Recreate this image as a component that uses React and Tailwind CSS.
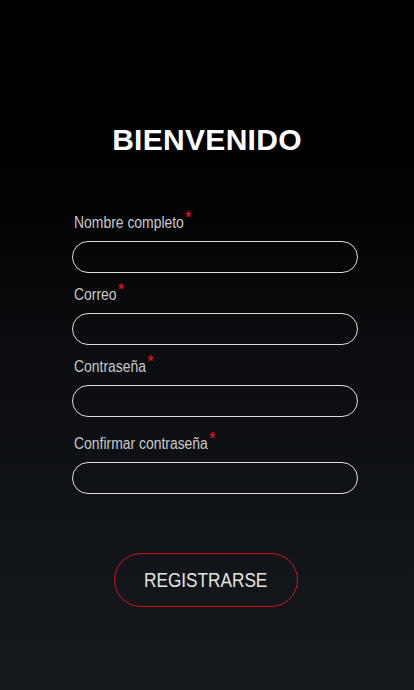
import React from "react";

const Field = ({ label, className = "" }) => (
  <div className={`flex flex-col ${className}`}>
    <label className="h-[18px] pl-[2px] leading-[18px]">
      <span className="inline-block origin-left scale-x-[0.87] whitespace-nowrap text-[16px] leading-[18px] text-[#c9c9c9]">
        {label}
        <span className="relative -top-[5px] ml-[2px] text-[16px] font-bold leading-none text-[#d3121c]">*</span>
      </span>
    </label>
    <input
      type="text"
      className="mt-[9px] h-[32px] w-full rounded-[16px] border border-[#dedede] bg-transparent px-4 text-white outline-none"
    />
  </div>
);

export default function App() {
  return (
    <div className="flex min-h-[690px] w-full flex-col bg-gradient-to-b from-[#000000] via-[#0b0d10] to-[#15191d] font-['Liberation_Sans',sans-serif]">
      <h1 className="mt-[123px] text-center text-[30px] font-bold leading-[34px] tracking-[0.3px] text-white">
        BIENVENIDO
      </h1>
      <form className="ml-[72px] mt-[57px] flex w-[286px] flex-col">
        <Field label="Nombre completo" />
        <Field label="Correo" className="mt-[13px]" />
        <Field label="Contraseña" className="mt-[13px]" />
        <Field label="Confirmar contraseña" className="mt-[18px]" />
      </form>
      <div className="mt-[59px] flex justify-center">
        <button
          type="button"
          className="ml-[-2px] flex h-[54px] w-[184px] items-center justify-center rounded-[27px] border border-[#d0151f] bg-transparent"
        >
          <span className="inline-block scale-x-[0.86] text-[20px] text-[#e4e4e4]">REGISTRARSE</span>
        </button>
      </div>
    </div>
  );
}
